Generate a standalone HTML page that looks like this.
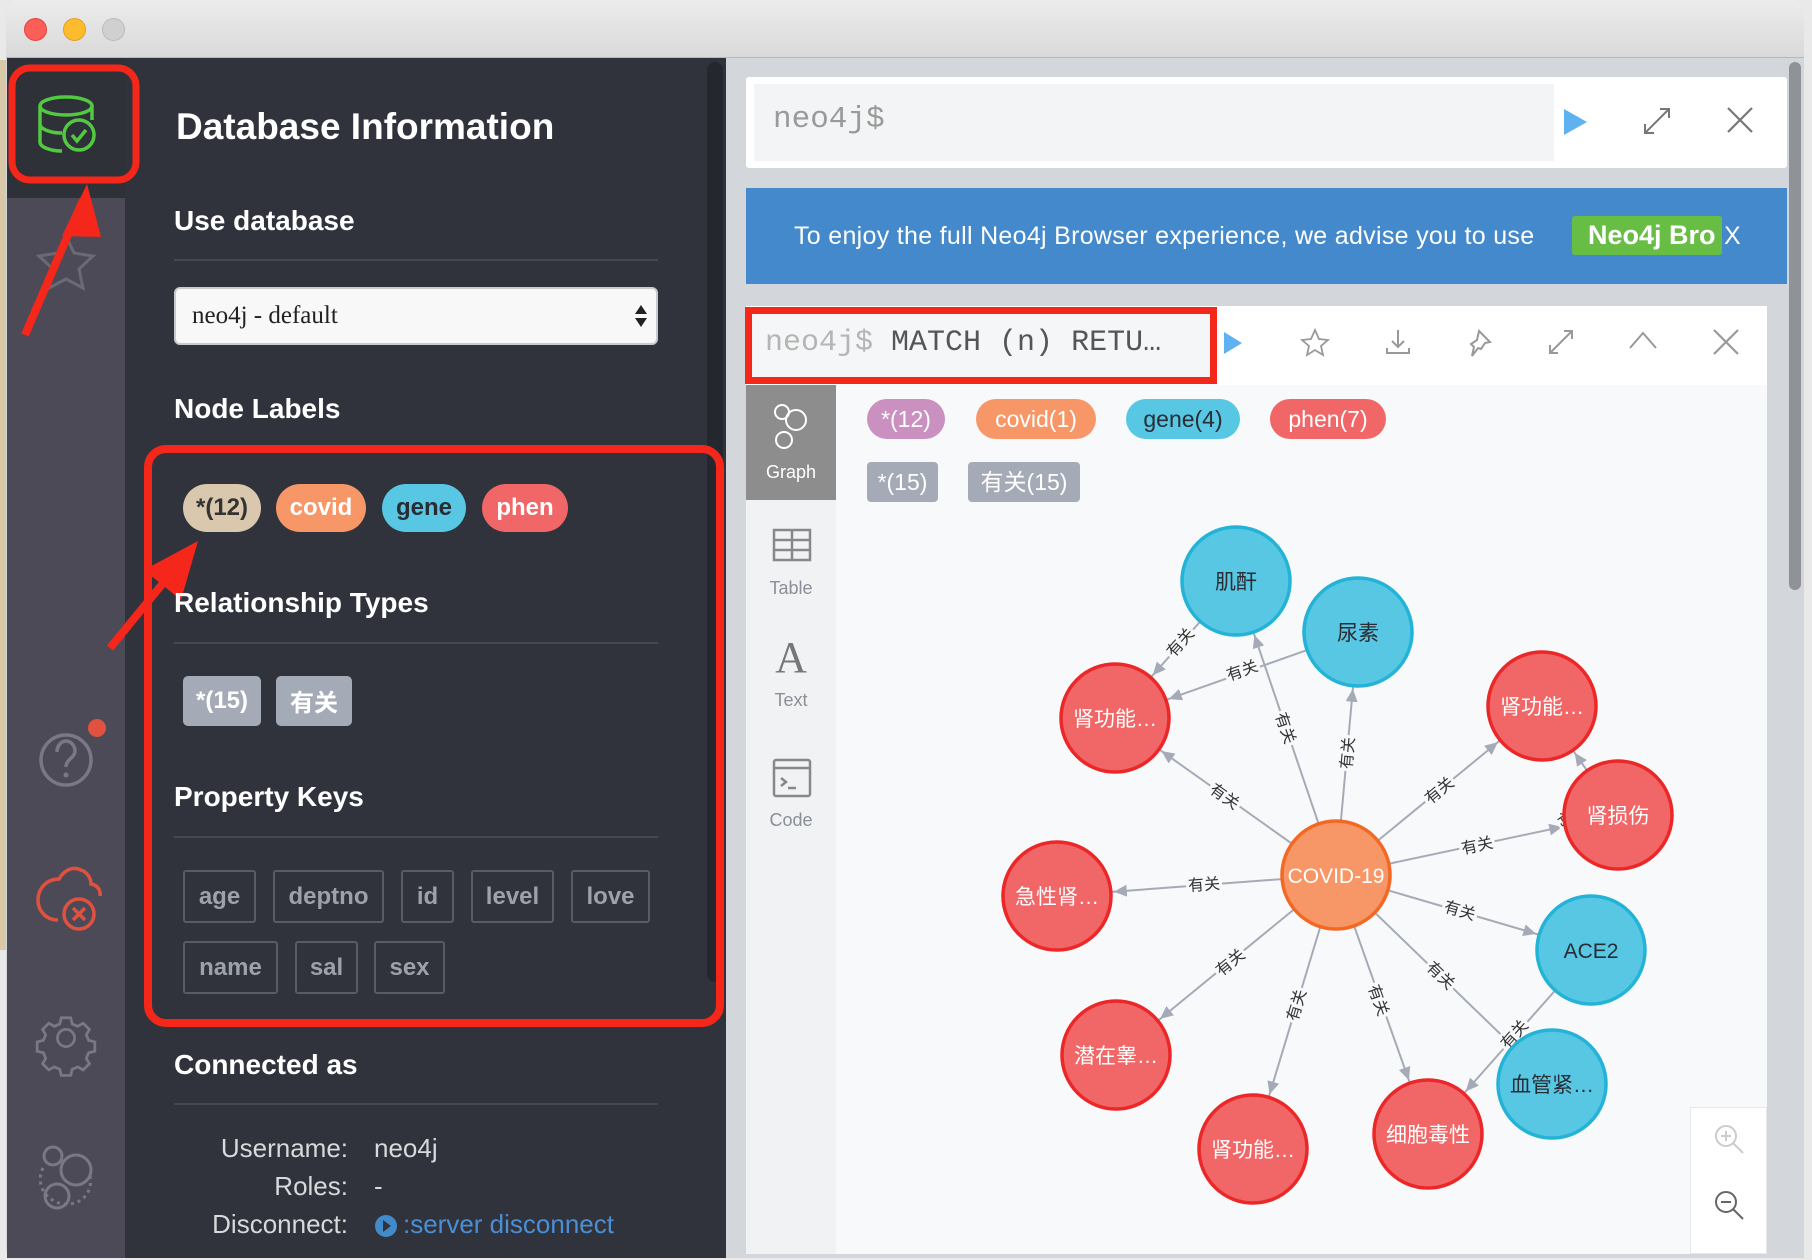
<!DOCTYPE html>
<html><head><meta charset="utf-8"><style>
*{margin:0;padding:0;box-sizing:border-box}
body{width:1812px;height:1260px;overflow:hidden;background:#e9e9e9;font-family:"Liberation Sans","Noto Sans CJK SC",sans-serif;position:relative}
.a{position:absolute}
.h{color:#fff;font-weight:bold;font-family:"Liberation Sans","Noto Sans CJK SC",sans-serif;white-space:nowrap}
.line{position:absolute;left:174px;width:484px;height:2px;background:#454852}
.chip{position:absolute;height:48px;border-radius:24px;font-weight:bold;font-size:24px;line-height:48px;text-align:center;color:#fff}
.rt{position:absolute;height:50px;border-radius:5px;background:#a5abb6;color:#fff;font-weight:bold;font-size:24px;line-height:50px;text-align:center}
.pk{position:absolute;height:53px;border:2px solid #595c66;border-radius:3px;color:#9da1aa;font-weight:bold;font-size:24px;line-height:49px;text-align:center}
.gc{position:absolute;height:40px;border-radius:20px;font-size:23px;line-height:40px;text-align:center;color:#fff}
.lbl{position:absolute;font-size:26px;color:#d8d9dc}
.tab{position:absolute;left:746px;width:90px;text-align:center;color:#8a8f98;font-size:18px}
</style></head><body>
<div class="a" style="left:0;top:60px;width:8px;height:890px;background:#d8c8a8"></div>
<div class="a" style="left:6px;top:0;width:1798px;height:1258px;background:#d3d6db;border-radius:10px;overflow:hidden">
 <div class="a" style="left:0;top:0;width:1798px;height:58px;background:linear-gradient(#ececec,#d9d9d9);border-bottom:1px solid #b8b8b8"></div>
 <div class="a" style="left:18px;top:18px;width:23px;height:23px;border-radius:50%;background:#fc5f57;border:1px solid #e0443e"></div>
 <div class="a" style="left:57px;top:18px;width:23px;height:23px;border-radius:50%;background:#fdbc2e;border:1px solid #dea123"></div>
 <div class="a" style="left:96px;top:18px;width:23px;height:23px;border-radius:50%;background:#d0d0d0;border:1px solid #bbb"></div>
</div>
<div class="a" style="left:7px;top:58px;width:118px;height:1200px;background:#4d4a57"></div>
<div class="a" style="left:7px;top:58px;width:118px;height:140px;background:#2f3139"></div>
<div class="a" style="left:125px;top:58px;width:601px;height:1200px;background:#30333c"></div>
<div class="a" style="left:707px;top:62px;width:16px;height:920px;background:#25272e;border-radius:8px"></div>

<svg class="a" style="left:0;top:0" width="740" height="1260" viewBox="0 0 740 1260">
 <g fill="none" stroke="#52c93f" stroke-width="3.5">
  <ellipse cx="66" cy="106" rx="26" ry="9"/>
  <path d="M40 106v36c0 5 10 9 22 9M40 124c0 5 10 9 22 9M92 106v14"/>
  <circle cx="79" cy="135" r="15"/>
  <path d="M72 135l5 6 9-11"/>
 </g>
 <rect x="12" y="68" width="124" height="112" rx="18" fill="none" stroke="#f5271a" stroke-width="7"/>
 <path d="M66 236l8 17 19 3-14 13 4 19-17-9-17 9 4-19-14-13 19-3z" fill="none" stroke="#6b6976" stroke-width="3"/>
 <path d="M25 335L83 200" stroke="#f5271a" stroke-width="8"/>
 <path d="M87 184L62 236 101 237z" fill="#f5271a"/>
 <path d="M110 648L182 560" stroke="#f5271a" stroke-width="8"/>
 <path d="M198 541L144 570 181 600z" fill="#f5271a"/>
 <circle cx="66" cy="760" r="25" fill="none" stroke="#7a7884" stroke-width="3.5"/>
 <path d="M57 752c0-7 5-11 9-11s9 4 9 10c0 7-9 8-9 16" fill="none" stroke="#7a7884" stroke-width="3.5"/>
 <circle cx="66" cy="775" r="2.5" fill="#7a7884"/>
 <circle cx="97" cy="728" r="9" fill="#e0513f"/>
 <path d="M58 920c-12 0-20-9-20-20 0-12 9-21 21-21 5-9 14-13 22-9 6 2 10 8 10 14 6 1 10 6 9 12" fill="none" stroke="#e0513f" stroke-width="3.5"/>
 <circle cx="79" cy="914" r="15" fill="none" stroke="#e0513f" stroke-width="3.5"/>
 <path d="M73 908l12 12M85 908l-12 12" stroke="#e0513f" stroke-width="3.5"/>
 <g fill="none" stroke="#7a7884" stroke-width="3.5" transform="translate(66 1038) scale(0.78) translate(-66 -1038)">
  <path d="M60 1012h12l2 8 7 3 7-4 8 8-4 7 3 7 8 2v12l-8 2-3 7 4 7-8 8-7-4-7 3-2 8h-12l-2-8-7-3-7 4-8-8 4-7-3-7-8-2v-12l8-2 3-7-4-7 8-8 7 4 7-3z"/>
  <circle cx="66" cy="1038" r="11"/>
 </g>
 <g fill="none" stroke="#7a7884" stroke-width="3">
  <circle cx="53" cy="1156" r="9"/><circle cx="76" cy="1170" r="15"/><circle cx="57" cy="1196" r="12"/>
  <path d="M43 1168c-8 15 2 33 20 36 20 2 32-14 26-32" stroke-dasharray="3 4"/>
 </g>
</svg>

<div class="a h" style="left:176px;top:106px;font-size:37px">Database Information</div>
<div class="a h" style="left:174px;top:205px;font-size:28px">Use database</div>
<div class="line" style="top:259px"></div>
<div class="a" style="left:174px;top:287px;width:484px;height:58px;background:#f8f8f8;border:2px solid #c9cacc;border-radius:6px;font-family:'Liberation Serif',serif;font-size:25px;line-height:54px;padding-left:16px;color:#222">neo4j - default</div>
<svg class="a" style="left:634px;top:304px" width="14" height="24"><path d="M7 1L13 10H1zM7 23L13 14H1z" fill="#222"/></svg>
<div class="a h" style="left:174px;top:393px;font-size:28px">Node Labels</div>
<div class="chip" style="left:183px;top:484px;width:78px;background:#d9c8ae;color:#333">*(12)</div>
<div class="chip" style="left:276px;top:484px;width:90px;background:#f79767">covid</div>
<div class="chip" style="left:382px;top:484px;width:84px;background:#57c7e3;color:#2a2c34">gene</div>
<div class="chip" style="left:482px;top:484px;width:86px;background:#f16667">phen</div>
<div class="a h" style="left:174px;top:587px;font-size:28px">Relationship Types</div>
<div class="line" style="top:642px"></div>
<div class="rt" style="left:183px;top:676px;width:78px">*(15)</div>
<div class="rt" style="left:276px;top:676px;width:76px;font-family:'Noto Sans CJK SC',sans-serif">有关</div>
<div class="a h" style="left:174px;top:781px;font-size:28px">Property Keys</div>
<div class="line" style="top:836px"></div>
<div class="pk" style="left:183px;top:870px;width:73px">age</div>
<div class="pk" style="left:273px;top:870px;width:111px">deptno</div>
<div class="pk" style="left:401px;top:870px;width:53px">id</div>
<div class="pk" style="left:471px;top:870px;width:83px">level</div>
<div class="pk" style="left:571px;top:870px;width:79px">love</div>
<div class="pk" style="left:183px;top:941px;width:95px">name</div>
<div class="pk" style="left:295px;top:941px;width:63px">sal</div>
<div class="pk" style="left:374px;top:941px;width:71px">sex</div>
<div class="a" style="left:144px;top:445px;width:580px;height:582px;border:8px solid #f5271a;border-radius:22px"></div>
<div class="a h" style="left:174px;top:1049px;font-size:28px">Connected as</div>
<div class="line" style="top:1103px"></div>
<div class="lbl" style="left:200px;width:148px;text-align:right;top:1133px">Username:</div>
<div class="lbl" style="left:374px;top:1133px">neo4j</div>
<div class="lbl" style="left:200px;width:148px;text-align:right;top:1171px">Roles:</div>
<div class="lbl" style="left:374px;top:1171px">-</div>
<div class="lbl" style="left:150px;width:198px;text-align:right;top:1209px">Disconnect:</div>
<svg class="a" style="left:374px;top:1214px" width="24" height="24"><circle cx="12" cy="12" r="11" fill="#428bca"/><path d="M9 6l8 6-8 6z" fill="#30333c"/></svg>
<div class="lbl" style="left:403px;top:1209px;color:#4a8fd6">:server disconnect</div>

<div class="a" style="left:726px;top:58px;width:1078px;height:1200px;background:#d3d6db"></div>
<div class="a" style="left:1789px;top:62px;width:12px;height:528px;background:#8f9297;border-radius:6px"></div>
<div class="a" style="left:746px;top:77px;width:1041px;height:91px;background:#fff;border-radius:3px"></div>
<div class="a" style="left:754px;top:84px;width:800px;height:77px;background:#f3f4f5"></div>
<div class="a" style="left:773px;top:102px;font-family:'Liberation Mono',monospace;font-size:31px;color:#9a9a9a">neo4j$</div>
<svg class="a" style="left:1560px;top:106px" width="30" height="32"><path d="M4 3L27 16 4 29z" fill="#5fb2f0"/></svg>
<svg class="a" style="left:1642px;top:106px" width="30" height="30" fill="none" stroke="#777" stroke-width="2"><path d="M3 27L27 3M18 3h9v9M3 18v9h9"/></svg>
<svg class="a" style="left:1726px;top:106px" width="28" height="28" stroke="#777" stroke-width="2.2"><path d="M2 2L26 26M26 2L2 26"/></svg>
<div class="a" style="left:746px;top:188px;width:1041px;height:96px;background:#4389cb"></div>
<div class="a" style="left:794px;top:222px;font-size:25px;color:#fff;letter-spacing:0.3px">To enjoy the full Neo4j Browser experience, we advise you to use</div>
<div class="a" style="left:1572px;top:216px;width:150px;height:39px;background:#68bd45;border-radius:3px;color:#fff;font-weight:bold;font-size:27px;line-height:39px;padding-left:16px;overflow:hidden;white-space:nowrap">Neo4j Bro</div>
<div class="a" style="left:1724px;top:222px;font-size:25px;color:#fff">X</div>
<div class="a" style="left:746px;top:306px;width:1021px;height:948px;background:#f8f9fb"></div>
<div class="a" style="left:746px;top:306px;width:1021px;height:79px;background:#fff"></div>
<div class="a" style="left:752px;top:314px;width:460px;height:64px;background:#f5f6f7"></div>
<div class="a" style="left:765px;top:326px;font-family:'Liberation Mono',monospace;font-size:30px;color:#555;white-space:nowrap"><span style="color:#b5b5b5">neo4j$</span> MATCH (n) RETU…</div>
<div class="a" style="left:745px;top:307px;width:472px;height:77px;border:7px solid #f5271a"></div>
<svg class="a" style="left:1222px;top:330px" width="22" height="26"><path d="M2 2L20 13 2 24z" fill="#5fb2f0"/></svg>
<svg class="a" style="left:1300px;top:328px" width="30" height="30" fill="none" stroke="#999" stroke-width="1.8"><path d="M15 2l4 9 9 1-7 6 2 9-8-5-8 5 2-9-7-6 9-1z"/></svg>
<svg class="a" style="left:1384px;top:328px" width="28" height="28" fill="none" stroke="#999" stroke-width="2"><path d="M14 2v17M8 13l6 6 6-6M3 20v5h22v-5"/></svg>
<svg class="a" style="left:1465px;top:328px" width="28" height="30" fill="none" stroke="#999" stroke-width="2"><path d="M14 3l11 11-5 1-4 6-3-1-6 8 2-9-3-3 6-4z"/></svg>
<svg class="a" style="left:1547px;top:328px" width="28" height="28" fill="none" stroke="#999" stroke-width="2"><path d="M3 25L25 3M17 3h8v8M3 17v8h8"/></svg>
<svg class="a" style="left:1628px;top:330px" width="30" height="20" fill="none" stroke="#999" stroke-width="2"><path d="M2 18L15 3l13 15"/></svg>
<svg class="a" style="left:1712px;top:328px" width="28" height="28" stroke="#999" stroke-width="2.2"><path d="M2 2L26 26M26 2L2 26"/></svg>
<div class="a" style="left:746px;top:385px;width:90px;height:869px;background:#f1f2f4"></div>
<div class="a" style="left:746px;top:385px;width:90px;height:115px;background:#8d8d8d"></div>
<svg class="a" style="left:770px;top:402px" width="42" height="52" fill="none" stroke="#fff" stroke-width="2"><circle cx="12" cy="10" r="7"/><circle cx="26" cy="18" r="10"/><circle cx="14" cy="38" r="8"/></svg>
<div class="tab" style="top:462px;color:#fff">Graph</div>
<svg class="a" style="left:772px;top:528px" width="40" height="34" fill="none" stroke="#888" stroke-width="2.5"><rect x="2" y="2" width="36" height="30"/><path d="M2 12h36M2 22h36M20 2v30"/></svg>
<div class="tab" style="top:578px">Table</div>
<div class="tab" style="top:632px;font-size:44px;font-family:'Liberation Serif',serif;color:#777">A</div>
<div class="tab" style="top:690px">Text</div>
<svg class="a" style="left:772px;top:758px" width="40" height="40" fill="none" stroke="#888" stroke-width="2.5"><rect x="2" y="2" width="36" height="36" rx="2"/><path d="M2 10h36M9 20l5 4-5 4M16 30h8"/></svg>
<div class="tab" style="top:810px">Code</div>
<div class="gc" style="left:867px;top:399px;width:78px;background:#c990c0">*(12)</div>
<div class="gc" style="left:976px;top:399px;width:120px;background:#f79767">covid(1)</div>
<div class="gc" style="left:1126px;top:399px;width:114px;background:#57c7e3;color:#2a2c34">gene(4)</div>
<div class="gc" style="left:1270px;top:399px;width:116px;background:#f16667">phen(7)</div>
<div class="gc" style="left:867px;top:462px;width:71px;background:#a5abb6;border-radius:4px">*(15)</div>
<div class="gc" style="left:968px;top:462px;width:112px;background:#a5abb6;border-radius:4px">有关(15)</div>

<svg class="a" style="left:0;top:0" width="1812" height="1260" viewBox="0 0 1812 1260" font-family="Liberation Sans,Noto Sans CJK SC,sans-serif">
 <defs><marker id="ar" markerUnits="userSpaceOnUse" markerWidth="80" markerHeight="20" refX="70" refY="10" orient="auto"><path d="M13 10L0 4 0 16z" fill="#a5abb6"/></marker></defs>
 <g stroke="#a5abb6" stroke-width="2" marker-end="url(#ar)">
  <line x1="1336" y1="875" x2="1236" y2="581"/>
  <line x1="1336" y1="875" x2="1358" y2="632"/>
  <line x1="1336" y1="875" x2="1115" y2="718"/>
  <line x1="1336" y1="875" x2="1542" y2="706"/>
  <line x1="1336" y1="875" x2="1618" y2="815"/>
  <line x1="1336" y1="875" x2="1057" y2="896"/>
  <line x1="1336" y1="875" x2="1591" y2="950"/>
  <line x1="1336" y1="875" x2="1116" y2="1055"/>
  <line x1="1336" y1="875" x2="1253" y2="1149"/>
  <line x1="1336" y1="875" x2="1428" y2="1134"/>
  <line x1="1336" y1="875" x2="1552" y2="1084"/>
  <line x1="1236" y1="581" x2="1115" y2="718"/>
  <line x1="1358" y1="632" x2="1115" y2="718"/>
  <line x1="1618" y1="815" x2="1542" y2="706"/>
  <line x1="1591" y1="950" x2="1428" y2="1134"/>
 </g>
 <g font-size="16" fill="#333" text-anchor="middle">
  <g transform="translate(1286,728) rotate(71.2)"><rect x="-18" y="-10" width="36" height="20" fill="#f8f9fb"/><text y="6">有关</text></g>
  <g transform="translate(1347,753) rotate(-84.8)"><rect x="-18" y="-10" width="36" height="20" fill="#f8f9fb"/><text y="6">有关</text></g>
  <g transform="translate(1225,796) rotate(35.4)"><rect x="-18" y="-10" width="36" height="20" fill="#f8f9fb"/><text y="6">有关</text></g>
  <g transform="translate(1439,790) rotate(-39.4)"><rect x="-18" y="-10" width="36" height="20" fill="#f8f9fb"/><text y="6">有关</text></g>
  <g transform="translate(1477,845) rotate(-12)"><rect x="-18" y="-10" width="36" height="20" fill="#f8f9fb"/><text y="6">有关</text></g>
  <g transform="translate(1204,884) rotate(-4.3)"><rect x="-18" y="-10" width="36" height="20" fill="#f8f9fb"/><text y="6">有关</text></g>
  <g transform="translate(1460,910) rotate(16.4)"><rect x="-18" y="-10" width="36" height="20" fill="#f8f9fb"/><text y="6">有关</text></g>
  <g transform="translate(1230,962) rotate(-39.3)"><rect x="-18" y="-10" width="36" height="20" fill="#f8f9fb"/><text y="6">有关</text></g>
  <g transform="translate(1296,1005) rotate(-73.1)"><rect x="-18" y="-10" width="36" height="20" fill="#f8f9fb"/><text y="6">有关</text></g>
  <g transform="translate(1379,1000) rotate(70.4)"><rect x="-18" y="-10" width="36" height="20" fill="#f8f9fb"/><text y="6">有关</text></g>
  <g transform="translate(1441,975) rotate(44)"><rect x="-18" y="-10" width="36" height="20" fill="#f8f9fb"/><text y="6">有关</text></g>
  <g transform="translate(1180,642) rotate(-48.6)"><rect x="-18" y="-10" width="36" height="20" fill="#f8f9fb"/><text y="6">有关</text></g>
  <g transform="translate(1242,670) rotate(-19.5)"><rect x="-18" y="-10" width="36" height="20" fill="#f8f9fb"/><text y="6">有关</text></g>
  <g transform="translate(1570,825) rotate(55.1)"><rect x="-18" y="-10" width="36" height="20" fill="#f8f9fb"/><text y="6">有关</text></g>
  <g transform="translate(1514,1034) rotate(-48.5)"><rect x="-18" y="-10" width="36" height="20" fill="#f8f9fb"/><text y="6">有关</text></g>
 </g>
 <g stroke-width="3.5" font-size="21" text-anchor="middle">
  <circle cx="1236" cy="581" r="54" fill="#57c7e3" stroke="#23b3d7"/><text x="1236" y="589" fill="#2a2c34" stroke="none">肌酐</text>
  <circle cx="1358" cy="632" r="54" fill="#57c7e3" stroke="#23b3d7"/><text x="1358" y="640" fill="#2a2c34" stroke="none">尿素</text>
  <circle cx="1115" cy="718" r="54" fill="#f16667" stroke="#eb2728"/><text x="1115" y="726" fill="#fff" stroke="none">肾功能…</text>
  <circle cx="1542" cy="706" r="54" fill="#f16667" stroke="#eb2728"/><text x="1542" y="714" fill="#fff" stroke="none">肾功能…</text>
  <circle cx="1618" cy="815" r="54" fill="#f16667" stroke="#eb2728"/><text x="1618" y="823" fill="#fff" stroke="none">肾损伤</text>
  <circle cx="1057" cy="896" r="54" fill="#f16667" stroke="#eb2728"/><text x="1057" y="904" fill="#fff" stroke="none">急性肾…</text>
  <circle cx="1591" cy="950" r="54" fill="#57c7e3" stroke="#23b3d7"/><text x="1591" y="958" fill="#2a2c34" stroke="none">ACE2</text>
  <circle cx="1116" cy="1055" r="54" fill="#f16667" stroke="#eb2728"/><text x="1116" y="1063" fill="#fff" stroke="none">潜在睾…</text>
  <circle cx="1552" cy="1084" r="54" fill="#57c7e3" stroke="#23b3d7"/><text x="1552" y="1092" fill="#2a2c34" stroke="none">血管紧…</text>
  <circle cx="1428" cy="1134" r="54" fill="#f16667" stroke="#eb2728"/><text x="1428" y="1142" fill="#fff" stroke="none">细胞毒性</text>
  <circle cx="1253" cy="1149" r="54" fill="#f16667" stroke="#eb2728"/><text x="1253" y="1157" fill="#fff" stroke="none">肾功能…</text>
  <circle cx="1336" cy="875" r="54" fill="#f79767" stroke="#f36924"/><text x="1336" y="883" fill="#fff" stroke="none">COVID-19</text>
 </g>
</svg>
<div class="a" style="left:1690px;top:1107px;width:77px;height:147px;background:#fff;border:1px solid #e6e7ea"></div>
<svg class="a" style="left:1712px;top:1122px" width="34" height="34" fill="none" stroke="#ccc" stroke-width="2"><circle cx="14" cy="14" r="10"/><path d="M21 21l10 10M9 14h10M14 9v10"/></svg>
<svg class="a" style="left:1712px;top:1188px" width="34" height="34" fill="none" stroke="#666" stroke-width="2"><circle cx="14" cy="14" r="10"/><path d="M21 21l10 10M9 14h10"/></svg>
</body></html>
